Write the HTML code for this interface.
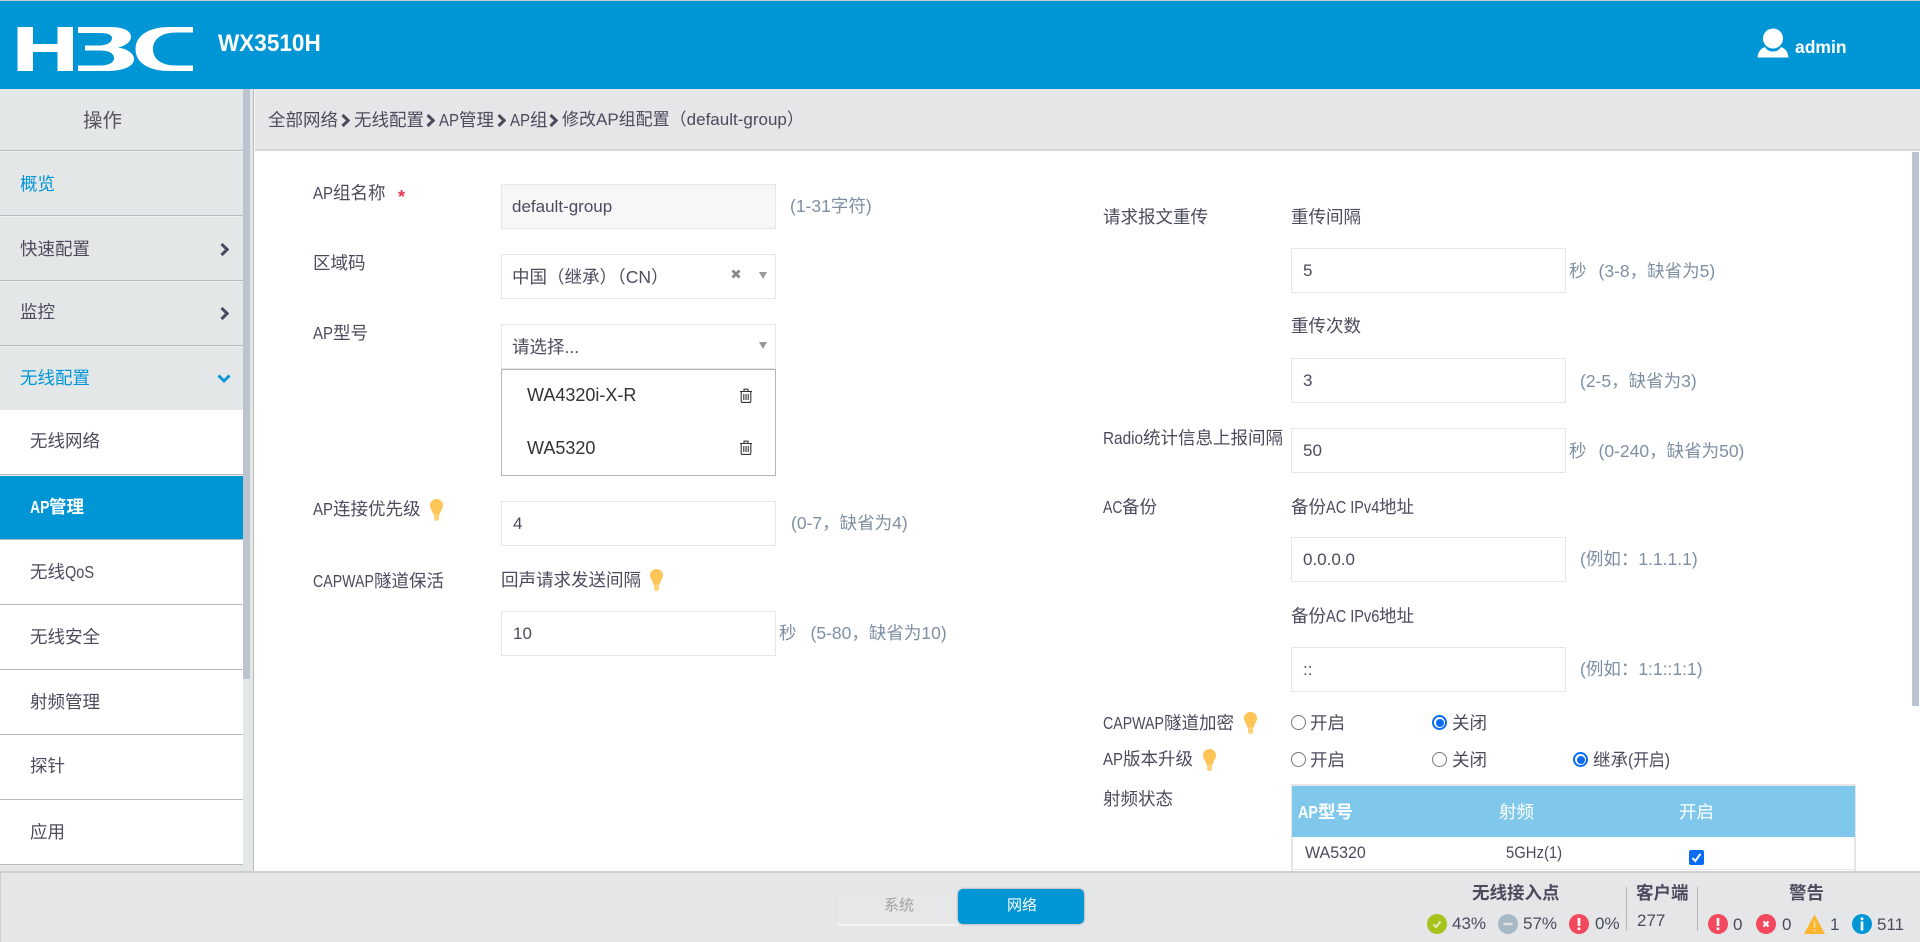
<!DOCTYPE html>
<html lang="zh"><head><meta charset="utf-8"><title>WX3510H</title>
<style>
*{box-sizing:border-box}
html,body{margin:0;padding:0;width:1920px;height:942px;overflow:hidden;background:#fff}
body{font-family:"Liberation Sans","Noto Sans CJK SC",sans-serif;font-size:17.5px;color:#4b4b5e;position:relative}
.a{position:absolute}
.t{position:absolute;white-space:nowrap;line-height:24px;height:24px}
.h{color:#7f8fa3}
.i{position:absolute;left:501px;width:275px;height:45px;border:1px solid #e6e6e6;background:#fff;padding:0 0 0 11px;line-height:43px;white-space:nowrap;font-size:17px}
.r{left:1291px}
.l{position:absolute;left:0;width:243px;height:2px;background:#b8bbbe;border-bottom:1px solid #eef0f0}
.rad{position:absolute;width:15px;height:15px;border-radius:50%;border:1px solid #767676;background:#fff}
.rad.on{border:2px solid #0a6cf5}
.rad.on:after{content:"";position:absolute;left:1.5px;top:1.5px;width:8px;height:8px;border-radius:50%;background:#0a6cf5}
svg{position:absolute;display:block}
.n{display:inline-block;white-space:nowrap;transform-origin:0 50%}
.ap{width:20px;transform:scaleX(.86)}
.cw{width:61px;transform:scaleX(.81)}
</style></head><body>
<svg width="0" height="0" style="position:absolute"><defs>
<symbol id="bulb" viewBox="0 0 13 22"><path d="M6.500 0C2.800 0 0 2.800 0 6.300C0 9.800 2.600 11.500 3.400 15.600H9.600C10.400 11.500 13 9.800 13 6.300C13 2.800 10.200 0 6.500 0Z" fill="#fec455"/><path d="M4 15.600H9V19.500C9 21 7.800 22 6.500 22C5.200 22 4 21 4 19.500Z" fill="#fed07a"/></symbol>
<symbol id="trash" viewBox="0 0 14 15"><path d="M1 3.500H13M5 3.500V1.200H9V3.500M2.200 3.500V13.200C2.200 13.900 2.700 14.400 3.400 14.400H10.600C11.300 14.400 11.800 13.900 11.800 13.200V3.500M4.800 6V12M7 6V12M9.200 6V12" fill="none" stroke="#333" stroke-width="1.100"/></symbol>
<symbol id="chev" viewBox="0 0 9 13"><path d="M1.500 1L7.200 6.500L1.500 12" fill="none" stroke="#4b4b5e" stroke-width="3"/></symbol>
</defs></svg>

<!-- header -->
<div class="a" style="left:0;top:0;width:1920px;height:1px;background:#ccc"></div>
<div class="a" style="left:0;top:1px;width:1920px;height:88px;background:#0096d6"></div>
<svg style="left:0;top:0" width="220" height="89" viewBox="0 0 220 89"><path fill="#fff" d="M17.500 27H33V44H57.500V27H73V71H57.500V52H33V71H17.500Z"/><path fill="#fff" d="M78 27H110C124 27 131 31 131 37C131 42 125 46 118 47.500C127 49 134 53 134 59C134 67 122 71 106 71H78V65.500H100C108 65.500 114 63 114 58C114 53 108 50.500 100 50.500H85V45.500H98C106 45.500 112 43 112 38C112 35 108 33 100 33H78Z"/><path fill="#fff" d="M193 27H170C148 27 135.500 36 135.500 49C135.500 62.500 148 71 170 71H193V65.500H176C161 65.500 153 59 153 49C153 39.500 161 32.500 176 32.500H193Z"/></svg>
<div class="t" style="left:218px;top:32px;font-size:24.5px;font-weight:700;color:#fff;transform:scaleX(.92);transform-origin:0 50%">WX3510H</div>
<svg style="left:1757px;top:28px" width="32" height="30" viewBox="0 0 32 30"><circle cx="16" cy="10.500" r="10" fill="#fff"/><path d="M8 19C10 22.500 13 23.500 16 23.500C19 23.500 22 22.500 24 19C28 20.500 31 23.500 31.500 29.500H.5C1 23.500 4 20.500 8 19Z" fill="#fff"/></svg>
<div class="t" style="left:1795px;top:35px;font-weight:700;color:#fff">admin</div>

<!-- sidebar -->
<div class="a" style="left:0;top:89px;width:253px;height:782px;background:#e4e7e8"></div>
<div class="a" style="left:0;top:410px;width:243px;height:455px;background:#fff"></div>
<div class="a" style="left:243px;top:89px;width:7px;height:590px;background:#bcc5cf"></div>
<div class="a" style="left:253px;top:89px;width:2px;height:782px;background:#fff"></div>
<div class="a" style="left:253px;top:89px;width:1px;height:782px;background:#b9b9b9"></div>
<div class="l" style="top:150px"></div><div class="l" style="top:215px"></div><div class="l" style="top:280px"></div><div class="l" style="top:345px"></div><div class="l" style="top:474px"></div><div class="l" style="top:604px;height:1px;border:0"></div><div class="l" style="top:669px;height:1px;border:0"></div><div class="l" style="top:734px;height:1px;border:0"></div><div class="l" style="top:799px;height:1px;border:0"></div><div class="l" style="top:864px;height:1px;border:0"></div>
<div class="a" style="left:0;top:476px;width:243px;height:63px;background:#0096d6"></div>
<div class="l" style="top:539px;height:1px;border:0"></div>
<div class="t" style="left:83px;top:109px;font-size:19.5px;color:#55555f">操作</div>
<div class="t" style="left:20px;top:172px;color:#0096d6">概览</div>
<div class="t" style="left:20px;top:237px">快速配置</div>
<div class="t" style="left:20px;top:300px">监控</div>
<div class="t" style="left:20px;top:366px;color:#0096d6">无线配置</div>
<svg style="left:220px;top:243px" width="9" height="13"><use href="#chev"/></svg>
<svg style="left:220px;top:307px" width="9" height="13"><use href="#chev"/></svg>
<svg style="left:217px;top:374px" width="14" height="9" viewBox="0 0 14 9"><path d="M1.500 1.500L7 7L12.500 1.500" fill="none" stroke="#0096d6" stroke-width="2.800"/></svg>
<div class="t" style="left:30px;top:429px">无线网络</div>
<div class="t" style="left:30px;top:495px;color:#fff;font-weight:700"><span class="n" style="width:19px;transform:scaleX(.8)">AP</span>管理</div>
<div class="t" style="left:30px;top:560px">无线<span class="n" style="width:29px;transform:scaleX(.83)">QoS</span></div>
<div class="t" style="left:30px;top:625px">无线安全</div>
<div class="t" style="left:30px;top:690px">射频管理</div>
<div class="t" style="left:30px;top:754px">探针</div>
<div class="t" style="left:30px;top:820px">应用</div>

<!-- breadcrumb -->
<div class="a" style="left:255px;top:89px;width:1665px;height:62px;background:#e5e6e8;border-bottom:2px solid #d6d6d6"></div>
<div class="t" style="left:268px;top:108px">全部网络</div>
<svg style="left:341px;top:114px" width="9" height="13"><use href="#chev"/></svg>
<div class="t" style="left:354px;top:108px">无线配置</div>
<svg style="left:426px;top:114px" width="9" height="13"><use href="#chev"/></svg>
<div class="t" style="left:439px;top:108px"><span class="n ap">AP</span>管理</div>
<svg style="left:497px;top:114px" width="9" height="13"><use href="#chev"/></svg>
<div class="t" style="left:510px;top:108px"><span class="n ap">AP</span>组</div>
<svg style="left:549px;top:114px" width="9" height="13"><use href="#chev"/></svg>
<div class="t" style="left:562px;top:108px;font-size:17px">修改AP组配置（default-group）</div>

<!-- main scrollbar -->
<div class="a" style="left:1912px;top:152px;width:7px;height:554px;background:#bcc5cf"></div>

<!-- left form -->
<div class="t" style="left:313px;top:181px"><span class="n ap">AP</span>组名称</div>
<div class="t" style="left:398px;top:185px;color:#e8344e;font-size:18px;font-weight:700">*</div>
<div class="t" style="left:313px;top:251px">区域码</div>
<div class="t" style="left:313px;top:321px"><span class="n ap">AP</span>型号</div>
<div class="t" style="left:313px;top:497px"><span class="n ap">AP</span>连接优先级</div>
<svg style="left:430px;top:499px" width="13" height="22"><use href="#bulb"/></svg>
<div class="t" style="left:313px;top:569px"><span class="n cw">CAPWAP</span>隧道保活</div>

<div class="i" style="top:184px;background:#f7f7f7;padding-left:10px">default-group</div>
<div class="t h" style="left:790px;top:194px">(1-31字符)</div>
<div class="i" style="top:254px;font-size:17.5px;padding-left:10px;line-height:45px">中国（继承）（CN）</div>
<svg style="left:731px;top:269px" width="10" height="10" viewBox="0 0 10 10"><path d="M1.500 1.500L8.500 8.500M8.500 1.500L1.500 8.500" stroke="#888" stroke-width="2.800"/></svg>
<svg style="left:759px;top:272px" width="8" height="7" viewBox="0 0 8 7"><path d="M0 0H8L4 7Z" fill="#999"/></svg>
<div class="i" style="top:324px;font-size:17.5px;padding-left:10px;line-height:45px">请选择...</div>
<svg style="left:759px;top:342px" width="8" height="7" viewBox="0 0 8 7"><path d="M0 0H8L4 7Z" fill="#999"/></svg>
<div class="a" style="left:501px;top:369px;width:275px;height:107px;border:1px solid #b5b5b5;background:#fff"></div>
<div class="t" style="left:527px;top:383px;font-size:18px;color:#333">WA4320i-X-R</div>
<div class="t" style="left:527px;top:436px;font-size:18px;color:#333">WA5320</div>
<svg style="left:739px;top:388px" width="14" height="15"><use href="#trash"/></svg>
<svg style="left:739px;top:440px" width="14" height="15"><use href="#trash"/></svg>
<div class="i" style="top:501px">4</div>
<div class="t h" style="left:791px;top:511px">(0-7，缺省为4)</div>
<div class="t" style="left:501px;top:568px">回声请求发送间隔</div>
<svg style="left:650px;top:569px" width="13" height="22"><use href="#bulb"/></svg>
<div class="i" style="top:611px">10</div>
<div class="t h" style="left:779px;top:621px">秒<span style="margin-left:14px">(5-80，缺省为10)</span></div>

<!-- right form -->
<div class="t" style="left:1103px;top:205px">请求报文重传</div>
<div class="t" style="left:1291px;top:205px">重传间隔</div>
<div class="i r" style="top:248px">5</div>
<div class="t h" style="left:1569px;top:259px">秒<span style="margin-left:12px">(3-8，缺省为5)</span></div>
<div class="t" style="left:1291px;top:314px">重传次数</div>
<div class="i r" style="top:358px">3</div>
<div class="t h" style="left:1580px;top:369px">(2-5，缺省为3)</div>
<div class="t" style="left:1103px;top:426px"><span class="n" style="width:40px;transform:scaleX(.875)">Radio</span>统计信息上报间隔</div>
<div class="i r" style="top:428px">50</div>
<div class="t h" style="left:1569px;top:439px">秒<span style="margin-left:12px">(0-240，缺省为50)</span></div>
<div class="t" style="left:1103px;top:495px"><span class="n" style="width:19px;transform:scaleX(.8)">AC</span>备份</div>
<div class="t" style="left:1291px;top:495px">备份<span class="n" style="width:53px;transform:scaleX(.83)">AC IPv4</span>地址</div>
<div class="i r" style="top:537px">0.0.0.0</div>
<div class="t h" style="left:1580px;top:547px">(例如：1.1.1.1)</div>
<div class="t" style="left:1291px;top:604px">备份<span class="n" style="width:53px;transform:scaleX(.83)">AC IPv6</span>地址</div>
<div class="i r" style="top:647px">::</div>
<div class="t h" style="left:1580px;top:657px">(例如：1:1::1:1)</div>
<div class="t" style="left:1103px;top:711px"><span class="n cw">CAPWAP</span>隧道加密</div>
<svg style="left:1244px;top:712px" width="13" height="22"><use href="#bulb"/></svg>
<div class="t" style="left:1103px;top:747px"><span class="n ap">AP</span>版本升级</div>
<svg style="left:1203px;top:749px" width="13" height="22"><use href="#bulb"/></svg>
<div class="rad" style="left:1291px;top:715px"></div><div class="t" style="left:1310px;top:711px">开启</div>
<div class="rad on" style="left:1432px;top:715px"></div><div class="t" style="left:1452px;top:711px">关闭</div>
<div class="rad" style="left:1291px;top:752px"></div><div class="t" style="left:1310px;top:748px">开启</div>
<div class="rad" style="left:1432px;top:752px"></div><div class="t" style="left:1452px;top:748px">关闭</div>
<div class="rad on" style="left:1573px;top:752px"></div><div class="t" style="left:1593px;top:748px">继承<span class="n" style="width:80px;transform:scaleX(.9)">(开启)</span></div>
<div class="t" style="left:1103px;top:787px">射频状态</div>

<!-- table -->
<div class="a" style="left:1291px;top:784px;width:565px;height:87px;border:2px solid #e6e6e6;border-bottom:0;background:#fff"></div>
<div class="a" style="left:1292px;top:786px;width:563px;height:51px;background:#7fc8eb"></div>
<div class="t" style="left:1298px;top:800px;color:#fff;font-weight:700"><span class="n" style="width:20px;transform:scaleX(.82)">AP</span>型号</div>
<div class="t" style="left:1499px;top:800px;color:#fff">射频</div>
<div class="t" style="left:1679px;top:800px;color:#fff">开启</div>
<div class="t" style="left:1305px;top:841px;font-size:16.5px"><span class="n" style="transform:scaleX(.97)">WA5320</span></div>
<div class="t" style="left:1506px;top:841px;font-size:16.5px"><span class="n" style="transform:scaleX(.9)">5GHz(1)</span></div>
<svg style="left:1689px;top:850px" width="15" height="15" viewBox="0 0 15 15"><rect width="15" height="15" rx="2" fill="#0a6cf5"/><path d="M3.500 8L6.300 11L11.500 3.800" fill="none" stroke="#fff" stroke-width="2"/></svg>
<div class="a" style="left:1293px;top:869px;width:561px;height:1px;background:#e6e6e6"></div>

<!-- bottom bar -->
<div class="a" style="left:0;top:871px;width:1920px;height:71px;background:#e5e6e8;border-top:2px solid #cfcfcf;border-left:1px solid #cfcfcf"></div>
<div class="a" style="left:836px;top:890px;width:124px;height:36px;background:#e6e7e9;border-radius:4px;border:1px solid #e2e3e5;border-bottom:2px solid #f3f3f4"></div>
<div class="t" style="left:884px;top:894px;font-size:15px;color:#a2a2a2">系统</div>
<div class="a" style="left:958px;top:889px;width:126px;height:35px;background:#0096d6;border-radius:5px;box-shadow:0 0 2px #888"></div>
<div class="t" style="left:1007px;top:894px;font-size:15px;color:#fff">网络</div>

<div class="t" style="left:1472px;top:881px;font-weight:700">无线接入点</div>
<div class="t" style="left:1636px;top:881px;font-weight:700">客户端</div>
<div class="t" style="left:1789px;top:881px;font-weight:700">警告</div>
<div class="a" style="left:1626px;top:887px;width:1px;height:44px;background:#b9b3b0"></div>
<div class="a" style="left:1697px;top:887px;width:1px;height:44px;background:#b9b3b0"></div>

<svg style="left:1427px;top:914px" width="20" height="20" viewBox="0 0 20 20"><circle cx="10" cy="10" r="10" fill="#a4c41c"/><path d="M6.500 10.500L9 13L13.500 7.500" fill="none" stroke="#e5eec0" stroke-width="2"/></svg>
<div class="t" style="left:1452px;top:912px;font-size:17px">43%</div>
<svg style="left:1498px;top:914px" width="20" height="20" viewBox="0 0 20 20"><circle cx="10" cy="10" r="10" fill="#a8b9c6"/><rect x="5.500" y="8.800" width="9" height="2.400" fill="#d9e0e6"/></svg>
<div class="t" style="left:1523px;top:912px;font-size:17px">57%</div>
<svg style="left:1569px;top:914px" width="20" height="20" viewBox="0 0 20 20"><circle cx="10" cy="10" r="10" fill="#f2495f"/><rect x="8.700" y="4" width="2.600" height="8" fill="#fff"/><rect x="8.700" y="13.500" width="2.600" height="2.600" fill="#fff"/></svg>
<div class="t" style="left:1595px;top:912px;font-size:17px">0%</div>
<div class="t" style="left:1637px;top:909px;font-size:17px">277</div>
<svg style="left:1708px;top:914px" width="20" height="20" viewBox="0 0 20 20"><circle cx="10" cy="10" r="10" fill="#f2495f"/><rect x="8.700" y="4" width="2.600" height="8" fill="#fff"/><rect x="8.700" y="13.500" width="2.600" height="2.600" fill="#fff"/></svg>
<div class="t" style="left:1733px;top:913px;font-size:17px">0</div>
<svg style="left:1756px;top:914px" width="20" height="20" viewBox="0 0 20 20"><circle cx="10" cy="10" r="10" fill="#f2495f"/><path d="M7.500 7.500L12.500 12.500M12.500 7.500L7.500 12.500" stroke="#fff" stroke-width="2.200"/></svg>
<div class="t" style="left:1782px;top:913px;font-size:17px">0</div>
<svg style="left:1804px;top:914px" width="21" height="20" viewBox="0 0 21 20"><path d="M10.500 0.500L21 20H0Z" fill="#fdb52e"/><rect x="9.700" y="7" width="1.600" height="7" fill="#fde0a0"/><rect x="9.700" y="15.500" width="1.600" height="1.800" fill="#fde0a0"/></svg>
<div class="t" style="left:1830px;top:913px;font-size:17px">1</div>
<svg style="left:1852px;top:914px" width="20" height="20" viewBox="0 0 20 20"><circle cx="10" cy="10" r="10" fill="#0096d6"/><rect x="8.700" y="3.500" width="2.600" height="2.600" fill="#fff"/><rect x="8.700" y="7.500" width="2.600" height="9" fill="#fff"/></svg>
<div class="t" style="left:1877px;top:913px;font-size:17px">511</div>
</body></html>
